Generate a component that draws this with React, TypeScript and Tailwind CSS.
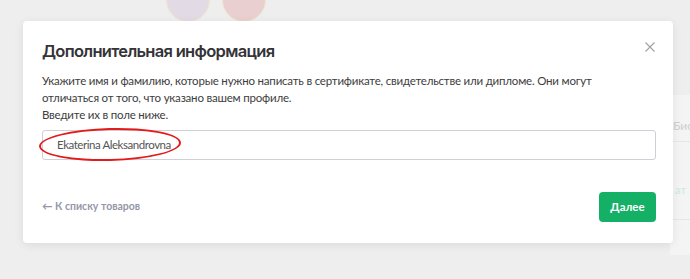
export default function App() {
  return (
    <div className="relative h-[279px] w-[690px] overflow-hidden bg-[#eeeeee] font-['Lato',sans-serif]">
      {/* faint page behind the modal */}
      <div className="absolute left-[166px] top-[-22px] h-[44px] w-[44px] rounded-full border border-[#efe6c8] bg-[#e2dbe6]" />
      <div className="absolute left-[222px] top-[-22px] h-[44px] w-[44px] rounded-full border border-[#efe6c8] bg-[#e9cfcf]" />
      <div className="absolute right-0 top-[95px] h-[160px] w-[20px] bg-[#f4f4f4]">
        <div className="mt-[22px] whitespace-nowrap pl-[3px] text-[12px] text-[#cfcfcf]">Бис</div>
        <div className="mt-[6px] h-px bg-[#e6e6e6]" />
        <div className="mt-[40px] pl-[5px] text-[11px] font-bold text-[#d3ebdf]">ат</div>
        <div className="mt-[20px] h-px bg-[#e6e6e6]" />
      </div>

      <div className="relative ml-[23px] mt-[21px] flex w-[650px] flex-col rounded-[4px] bg-white pb-[21px] pl-[19px] pr-[17px] pt-[18px] shadow-[0_2px_10px_rgba(0,0,0,0.08)]">
        <div className="flex items-start justify-between">
          <h2 className="font-['Inter',sans-serif] text-[16.5px] font-semibold leading-[24px] tracking-[-0.7px] text-[#333338]">
            Дополнительная информация
          </h2>
          <button className="mt-[2px] text-[#a0a0a0]">
            <svg width="12" height="12" viewBox="0 0 12 12" fill="none" stroke="currentColor" strokeWidth="1.1">
              <path d="M1.5 1.5l9 9M10.5 1.5l-9 9" />
            </svg>
          </button>
        </div>
        <p className="mt-[9px] whitespace-nowrap text-[11.5px] leading-[17px] tracking-[-0.2px] text-[#3d3d3d]">
          Укажите имя и фамилию, которые нужно написать в сертификате, свидетельстве или дипломе. Они могут
          <br />
          отличаться от того, что указано вашем профиле.
          <br />
          Введите их в поле ниже.
        </p>
        <div className="relative mt-[7px] flex h-[30px] w-[614px] items-center rounded-[3px] border border-[#cfcfd6] pl-[14px] text-[11.5px] tracking-[-0.45px] text-[#555555]">
          Ekaterina Aleksandrovna
          <div className="absolute left-[-4px] top-[-3px] h-[33px] w-[142px] rounded-[50%] border-2 border-[#e31b1b] [transform:rotate(-1.5deg)]" />
        </div>
        <div className="mt-[32px] flex w-[614px] items-center justify-between">
          <a className="text-[10.5px] font-bold text-[#9597a9]">← К списку товаров</a>
          <button className="h-[30px] w-[57px] rounded-[4px] bg-[#14b066] text-[11.5px] font-bold text-white">
            Далее
          </button>
        </div>
      </div>
    </div>
  );
}
